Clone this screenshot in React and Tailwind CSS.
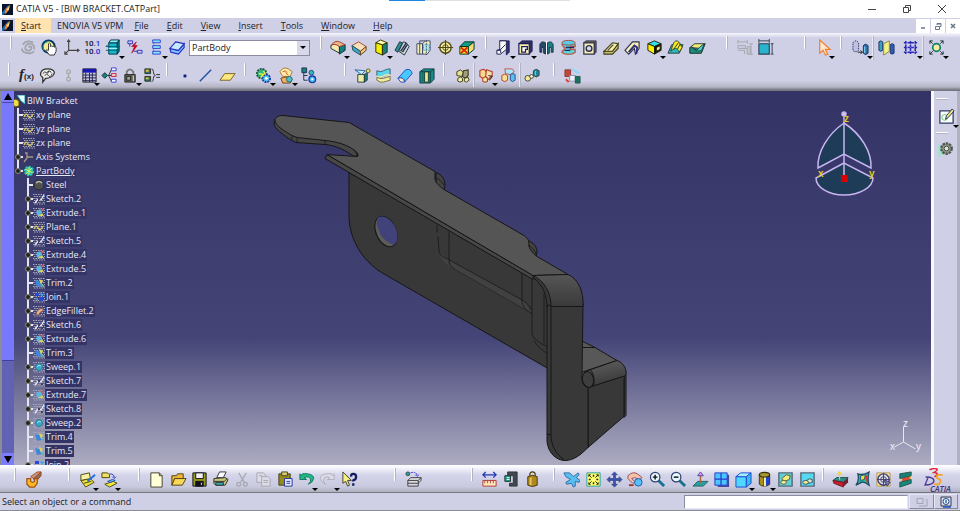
import React, { useState } from "react";

// 18x18 toolbar glyphs
const icons = {
  swirl: (
    <g stroke="#a2a2aa" strokeWidth="1.800">
      <path d="M9 9c1-2 4-1 3 1.500s-6 2.500-6.500-.5S8 4.500 11 5s5 3 4 6" />
      <path d="M3 6c2-4 8-4.500 11-2M2 10c0 4 5 6 9 4.500M5 14c3 2 8 1.500 10-1" />
    </g>
  ),
  hand: (
    <g>
      <circle cx="8" cy="8" r="6.500" fill="#f5eb8c" stroke="#003a60" strokeWidth="2" />
      <path d="M3 12c-2-4 0-9 5-9" stroke="#20a0b0" />
      <path d="M8 12V5q1-1.500 2 0v3q1-1 2 0 1-1 2 .5 1-.5 2 .5v4l-2 4h-5l-4-5q1-1.500 3 .5" fill="#fff" stroke="#333" />
    </g>
  ),
  axis: (
    <g stroke="#444" strokeWidth="1.200">
      <path d="M6 1v11h11M6 12l-4 4M4.500 3 6 1l1.500 2M15 10.500l2 1.500-2 1.500M2 13v3h3" />
    </g>
  ),
  solid: (
    <g stroke="#003848">
      <path d="M4 4h9v12H4z" fill="#18b8c8" />
      <path d="m4 4 2-3h9l-2 3z" fill="#90f0f8" />
      <path d="m13 4 2-3v12l-2 3z" fill="#108090" />
      <path d="M1 8h15M1 8l2-2M1 12h14" stroke="#006070" />
      <path d="M4 10h9" stroke="#b0f8ff" />
    </g>
  ),
  swap: (
    <g>
      <path d="M2 2h5v3H2zM4 5v3M12 12h5v3h-5zM8 13h4" stroke="#3030c0" />
      <path d="m11 3-5 5h3l-3 7 6-8H9z" fill="#d00020" stroke="#b00018" strokeWidth=".6" />
    </g>
  ),
  stack: (
    <g stroke="#3040d0" fill="#80e8f8">
      <path d="M5 1h8v3H5zM5 7h8v3H5zM5 13h8v3H5z" />
      <path d="M6 4v3M6 10v3" strokeDasharray="1 1" />
    </g>
  ),
  body: (
    <g stroke="#2030c0" strokeWidth="1.200">
      <path d="m1 10 1 4 8 2 6-7V5l-6 7z" fill="#80b8ff" />
      <path d="m7 3 9 2-6 7-9-2z" fill="#c8e8ff" />
    </g>
  ),
  pad: (
    <g stroke="#103030">
      <path d="M1 7q4-4 9 1v7l-9-5z" fill="#f6e8b0" />
      <path d="m10 8 6-2v6l-6 4z" fill="#108080" />
      <path d="M1 7q4-6 9-4l6 3-6 2Q5 4 1 7" fill="#e8b888" stroke="#a04030" />
    </g>
  ),
  pocket: (
    <g stroke="#a04838">
      <path d="m1 7 7-4 8 5-6 5z" fill="#f8e0b8" />
      <path d="m1 7 1 5 8 5v-4z" fill="#40a8c0" stroke="#205060" />
      <path d="m10 13 6-5v4l-6 5z" fill="#f0c878" stroke="#604020" />
    </g>
  ),
  shaft: (
    <g stroke="#303000">
      <path d="m3 4 7 2v11l-7-3z" fill="#f0f000" />
      <path d="m10 6 5-2v10l-5 3z" fill="#108080" />
      <path d="m3 4 5-3 7 3-5 2z" fill="#ffffb0" />
    </g>
  ),
  rib: (
    <g stroke="#183848">
      <path d="m1 12 5-9 3 1-5 10z" fill="#309090" />
      <path d="m5 13 5-10 3 1 3 4-5 9z" fill="#d8d8c8" />
      <path d="m7 13 6-9M9 14l5-8" stroke="#203058" strokeWidth="1.500" />
    </g>
  ),
  grill: (
    <g stroke="#404868">
      <path d="M2 5h6v11H2zM8 5l3-3h5v10l-3 4H8z" fill="#f6f0b8" />
      <path d="M5 5V2h6M5 5v11M8 9h8" />
      <path d="M9 6h6v6H9z" fill="#b8e8f0" stroke="#10a0b0" strokeDasharray="1 1" />
      <path d="M12 1v16" strokeDasharray="2 1" />
    </g>
  ),
  hole: (
    <g stroke="#504810">
      <circle cx="9" cy="9" r="6" fill="#f8f0a8" strokeWidth="1.500" />
      <circle cx="9" cy="9" r="3" />
      <path d="M9 1v16M1 9h16" strokeWidth="1.200" />
    </g>
  ),
  cutbox: (
    <g stroke="#003030">
      <path d="M2 8h9v8H2z" fill="#ffe020" />
      <path d="m2 8 5-5h10l-6 5z" fill="#10a080" />
      <path d="m11 8 6-5v8l-6 5z" fill="#f0e070" />
      <path d="m3 9 7 6M10 9l-7 6" stroke="#e02000" strokeWidth="1.800" />
    </g>
  ),
  draft: (
    <g stroke="#202058">
      <path d="M5 2h10v12l-3 3V4z" fill="#303078" />
      <path d="M5 2h7v9l-6 5H2v-4h3z" fill="#fbfbf4" />
      <path d="m2 12 4-1 5-5M6 11v4" />
    </g>
  ),
  shell: (
    <g stroke="#202050">
      <path d="m2 5 3-3h11v11l-3 3V5z" fill="#303068" />
      <path d="M2 5h11v11H2z" fill="#f6eeb0" strokeWidth="1.300" />
      <path d="M5 8h6v3H9v3H5z" fill="#fff" strokeWidth="1.300" />
    </g>
  ),
  split: (
    <g stroke="#203048">
      <path d="M2 6c1-4 4-3 6-2v12l-2-1V9H4v5H2z" fill="#284870" />
      <path d="M16 6c-1-4-4-3-6-2v12l2-1V9h2v5h2z" fill="#188080" />
      <path d="M9 2v15" stroke="#fff" />
    </g>
  ),
  thread: (
    <g>
      <path d="M2 5c0 3 3 3 3 5s-3 2-3 4c3 3 11 3 14 0V11h-5V8h5V5" fill="#60d0e0" stroke="#b06048" strokeWidth="1.500" />
      <ellipse cx="9" cy="4" rx="7" ry="2.500" fill="#50d0e8" stroke="#b04840" />
      <path d="M6 9h9M5 12h6" stroke="#202860" strokeWidth="1.500" />
    </g>
  ),
  boss: (
    <g stroke="#303050">
      <path d="m3 4 2-2h11v12l-2 2V4z" fill="#686850" />
      <path d="M3 4h11v12H3z" fill="#f6eeb0" strokeWidth="1.300" />
      <circle cx="8.500" cy="10" r="3" fill="#d8d8f0" strokeWidth="1.500" />
    </g>
  ),
  wedge: (
    <g stroke="#404018" strokeWidth="1.200">
      <path d="M1 13v3h9l6-6V5l-6 8z" fill="#c8c070" />
      <path d="m1 13 9-9 6 1-6 8z" fill="#f6f0b4" />
      <path d="m5 12 6-6" />
    </g>
  ),
  wedge2: (
    <g stroke="#303050" strokeWidth="1.200">
      <path d="m1 12 8-9h7v7l-4 6-1-6-6 6z" fill="#f6f0b4" />
      <path d="m5 14 6-7 3 2-1 7" stroke="#303080" strokeWidth="2" />
    </g>
  ),
  cube: (
    <g stroke="#202000">
      <path d="m2 5 7-3 7 3-7 3z" fill="#30e0f0" />
      <path d="M2 5v7l7 4V8z" fill="#f8f000" />
      <path d="m9 8 7-3v7l-7 4z" fill="#101010" />
      <path d="m11 9 4-2v4l-4 2z" fill="#f3eca8" />
    </g>
  ),
  surfA: (
    <g stroke="#284038">
      <path d="m1 15 4-9h12l-4 9z" fill="#30b8c0" />
      <path d="M4 13c2-6 3-11 6-11s4 4 6 7l-3 5c-2-5-5-5-9-1z" fill="#f8e820" />
      <path d="m7 11 5-7M11 11l3-6" />
    </g>
  ),
  surfB: (
    <g stroke="#284038">
      <path d="M1 15V9l5-4h11l-4 10z" fill="#f0e878" />
      <path d="M1 9v6h12l4-10-4 5z" fill="#189080" />
      <path d="M3 8c3 4 6 5 8 1l5-4-2 6c-4 3-8 2-11-3z" fill="#40d8e8" />
    </g>
  ),
  dimOff: (
    <g stroke="#a8a8b0">
      <path d="M2 3h10M2 1v4M12 1v4M2 7h8v3H2zM5 10h7v6M16 5v12M14 5h4M14 16h4M2 12h7v4" />
      <path d="M12 8h3v8h-3z" fill="#c8c8c8" />
    </g>
  ),
  dim: (
    <g stroke="#304050">
      <path d="M2 5h11v11H2z" fill="#28b4cc" strokeWidth="1.200" />
      <path d="M2 2h11M2 0v4M13 0v4M16 5v11M14.500 5h3M14.500 16h3" />
    </g>
  ),
  arrow: <path d="M5 1v14l3.500-3 2.500 5 2.500-1-2.500-5h5z" fill="#ffe8d0" stroke="#f08030" strokeWidth="1.300" />,
  copyA: (
    <g stroke="#203060">
      <path d="M1 4q3-4 6 0v8q-3 3-6 0z" fill="#c0c0e0" strokeDasharray="1.500 1" />
      <path d="M12 7q2-3 5 0v8q-3 3-5 0z" fill="#2870b0" />
      <path d="M6 14h5M9 12l2 2-2 2" stroke="#202020" />
      <path d="M13.500 8v7" stroke="#a0e8f8" />
    </g>
  ),
  mirror: (
    <g stroke="#203060">
      <path d="M1 3q2-2 4 0v9q-2 2-4 0z" fill="#38a0c0" />
      <path d="M13 6q2-2 4 0v9q-2 2-4 0z" fill="#2860c0" />
      <path d="m6 5 6-3v11l-6 4z" fill="#f3f088" stroke="#888830" />
    </g>
  ),
  grid: <path d="M4 2v14M9 2v14M14 2v14M2 4h14M2 9h14M2 14h14" stroke="#2828b8" strokeWidth="1.600" strokeDasharray="3 .8" />,
  target: (
    <g stroke="#203030">
      <circle cx="9" cy="9" r="4" fill="#f8f0a0" stroke="#108070" strokeWidth="1.800" />
      <path d="M2 5V2h3M13 2h3v3M16 13v3h-3M5 16H2v-3M2 2l3 3M16 2l-3 3M16 16l-3-3M2 16l3-3" />
    </g>
  ),
  talk: (
    <g stroke="#303030">
      <path d="M9 2c5 0 8 2 7 5s-5 5-9 5l-3 4v-5C0 9 1 2 9 2z" fill="#ececec" strokeWidth="1.300" />
      <path d="M4 7q2-3 4-1t2-2M6 9q2-3 4 0t4-2M9 5q3-2 4 1" />
    </g>
  ),
  link: (
    <g stroke="#a8a8a8" strokeWidth="1.300">
      <circle cx="9" cy="5" r="2" /><circle cx="9" cy="13" r="2" /><path d="M9 7v4" />
    </g>
  ),
  table: (
    <g>
      <path d="M2 2h14v14H2z" fill="#c8c8e0" stroke="#202020" />
      <path d="M2 2h14v4H2z" fill="#1818b8" />
      <path d="M2 8.500h14M2 11.500h14M2 14.500h14M5 6v10M9 6v10M12 6v10" stroke="#202050" />
    </g>
  ),
  branch: (
    <g>
      <path d="m1 9 3-3 3 3-3 3z" fill="#108080" stroke="#203030" />
      <path d="M7 9h4M8 9l3-6M8 9l3 6" stroke="#303030" />
      <path d="M11 1h5v3h-5zM11 13h5v3h-5z" fill="#fff" stroke="#3838e0" />
      <path d="M11 7h5v3h-5z" fill="#f8d0d8" stroke="#c02040" />
    </g>
  ),
  lock: (
    <g stroke="#282828">
      <path d="M5 8V5q3-5 7 0v3" strokeWidth="2" stroke="#787878" />
      <path d="M3 8h11v8H3z" fill="#606058" />
      <path d="M5 10h4v4H5z" fill="#a0a090" /><path d="M12 9v6" stroke="#e8e8c0" />
    </g>
  ),
  equal: (
    <g>
      <path d="M2 2h6v5H2zM2 10h6v5H2z" fill="#187878" stroke="#303020" />
      <path d="M3 4h3M3 12h3" stroke="#f0c030" strokeWidth="2" />
      <path d="M9 2q2 0 2 3t2 4q-2 0-2 3t-2 4M14 8h4M14 11h4" stroke="#303030" />
    </g>
  ),
  point: <path d="M8 8h3v3H8z" fill="#102070" />,
  line: <path d="M3 15 15 3" stroke="#2050a0" strokeWidth="1.500" />,
  plane: <path d="m1 14 5-7h11l-5 7z" fill="#ffe880" stroke="#706020" />,
  gears: (
    <g>
      <circle cx="7" cy="7" r="5" fill="#30b888" stroke="#205838" strokeWidth="2" strokeDasharray="2 1" />
      <circle cx="12" cy="12" r="4" fill="#50c8f0" stroke="#2038a0" strokeWidth="2" strokeDasharray="2 1" />
      <path d="m4 7 5 1-3 3M9 4l2 4" stroke="#f0f040" strokeWidth="1.500" />
      <circle cx="12" cy="12" r="1.500" fill="#fff" />
    </g>
  ),
  painter: (
    <g>
      <path d="M2 5q4-6 9-3l4 3-2 5H5z" fill="#ffe8a8" stroke="#b07828" />
      <path d="m8 6 3 3M5 5q3-2 5 1" stroke="#c06020" />
      <path d="M3 12q6-3 12 1l-2 4H5z" fill="#f0b060" stroke="#704020" />
      <circle cx="12" cy="13" r="3" fill="#50c0c8" stroke="#206878" />
    </g>
  ),
  treeGear: (
    <g>
      <path d="M2 1h5v5H2z" fill="#188080" stroke="#203050" />
      <path d="M4 6v8h4M4 9h4" stroke="#203050" />
      <circle cx="12" cy="6" r="2.500" fill="#30b8c0" stroke="#204880" />
      <circle cx="13" cy="13" r="3.500" fill="#48c8f8" stroke="#2038a0" strokeWidth="1.500" />
      <circle cx="13" cy="13" r="1" fill="#fff" />
    </g>
  ),
  extrude: (
    <g stroke="#204040">
      <path d="M4 8h7v8H4z" fill="#f3eca8" /><path d="m11 8 3-2v8l-3 2z" fill="#108080" />
      <path d="m1 3 11 1-4 4z" fill="#b8f0ff" stroke="#3060a0" />
      <circle cx="15" cy="4" r="2" stroke="#606020" fill="#e8e070" />
    </g>
  ),
  layers: (
    <g stroke="#306070">
      <path d="M2 11q4 2 7 1t7-2v4q-4 1-7 2t-7-2z" fill="#f3eca8" stroke="#707030" />
      <path d="M2 4q4 2 7 0t7-2v6q-4 0-7 2t-7-1z" fill="#58d8f0" />
      <path d="M2 9.500q4 2 7 0t7-1" stroke="#f3eca8" strokeWidth="1.500" />
    </g>
  ),
  halfpipe: (
    <g stroke="#2050c0">
      <path d="m1 12 8-9q6-2 7 4l-8 9q0-6-7-4z" fill="#48c8ff" />
      <path d="M1 12q6-2 7 4H4z" fill="#fff0c0" />
    </g>
  ),
  book: (
    <g stroke="#104040">
      <path d="m2 5 4-3h11v11l-4 4H2z" fill="#188888" />
      <path d="M7 5h4v11H7z" fill="#f3e88a" />
      <path d="M2 5h11l4-3M13 5v12" />
      <path d="M5 6v10" strokeDasharray="1 1" />
    </g>
  ),
  asm: (
    <g stroke="#404020">
      <path d="m3 5 4-2 3 3-2 4-5-1z" fill="#e8e090" />
      <path d="m10 4 5-1v6l-3 3-3-2z" fill="#a0a080" strokeWidth="1.200" />
      <path d="M4 12q3-3 5 0v3q-3 2-5 0zM11 12l4-1 1 3-3 2-2-1z" fill="#f3ec9c" />
    </g>
  ),
  asmRed: (
    <g stroke="#b84030" strokeWidth="1.200">
      <path d="M2 4q4-3 6 0l2 5-3 4-5-3z" fill="#f8d890" />
      <path d="m9 3 6 2v4l-4 4-3-3z" fill="#f8e0a8" />
      <path d="M5 12q3-3 5 0v3q-3 2-5 0z" fill="#f3ec9c" /><path d="m11 9 4 1-3 4" stroke="#503030" />
    </g>
  ),
  asmBlue: (
    <g>
      <path d="M5 2h8l2 3-4 3-5-1z" fill="#a8e8ff" stroke="#d05048" />
      <path d="M2 9q3-3 6 0v5q-3 3-6 0z" fill="#f8e090" stroke="#b84030" />
      <path d="M11 8q3-2 5 0v6q-3 3-5 0z" fill="#58c0f0" stroke="#305088" />
    </g>
  ),
  joint: (
    <g stroke="#404030">
      <circle cx="4" cy="12" r="3" fill="#f3ec9c" /><circle cx="8" cy="10" r="2" fill="#f8f8d0" />
      <path d="M10 4q3-3 6 0v5q-3 3-6 0z" fill="#1888a0" />
      <path d="M12 4v5" stroke="#80d8e8" />
    </g>
  ),
  catalog: (
    <g>
      <path d="m5 0 13 6-5 1z" fill="#88d8f8" />
      <path d="M1 3h6v7H1z" fill="#c04838" stroke="#903830" /><path d="M6 9h6v6H6z" fill="#f0f0f8" stroke="#8090b8" />
      <path d="M12 10h5v7h-5z" fill="#187060" stroke="#205848" /><path d="m2 13 3 3" stroke="#e04030" strokeWidth="2" />
    </g>
  ),
  catch: (
    <g stroke="#a05018">
      <path d="m6 6 7-5h4l-6 8z" fill="#c89888" /><path d="m9 8 8-7v4l-6 7z" fill="#906858" />
      <path d="M2 8h4v3q2 2 4 0V8h3v5l-3 4H5l-3-3z" fill="#ffb820" strokeWidth="1.300" />
    </g>
  ),
  drawA: (
    <g stroke="#484810">
      <path d="m2 10 10-2 4 4-9 5z" fill="#f0e040" /><path d="m2 4 9-2 1 6-10 2z" fill="#f6f0a0" />
      <path d="m9 11 8-7" stroke="#2070e0" strokeWidth="2" /><path d="M5 13l8-2" />
    </g>
  ),
  drawB: (
    <g stroke="#484810">
      <path d="M1 2h6l2 2v3H1z" fill="#f0e060" /><path d="m4 14 9-3 4 2-8 4z" fill="#f0e840" />
      <path d="M9 3q5 0 5 4M12 6l2 2 2-2" stroke="#2838c8" /><path d="m7 11 5-2 3 1-5 2z" fill="#60c8f0" stroke="#3050a0" />
    </g>
  ),
  page: (
    <g stroke="#404030"><path d="M3 2h9l3 3v12H3z" fill="#ffffd8" /><path d="M12 2v3h3" /></g>
  ),
  open: (
    <g stroke="#504010"><path d="M2 15V5h5l1-2h6v5H5z" fill="#f0b838" /><path d="M2 15 5 8h12l-4 7z" fill="#f8d858" /></g>
  ),
  save: (
    <g stroke="#101020"><path d="M2 2h14v14H2z" fill="#989818" /><path d="M5 2h8v6H5z" fill="#f0f0f8" /><path d="M5 11h8v5H5z" fill="#101020" /><path d="M10 12h2v3h-2z" fill="#fff" /></g>
  ),
  print: (
    <g stroke="#303030"><path d="m2 8 12-1 3 2-3 6H4l-2-2z" fill="#c8c878" /><path d="m5 7 3-6h7l-3 6z" fill="#fff" /><path d="M2 11h11l3-3" /><path d="M4 12h8v3H4z" fill="#30a8b0" /></g>
  ),
  cut: (
    <g stroke="#a8a8b0" strokeWidth="1.300"><path d="m5 2 6 10M13 2 7 12" /><circle cx="5" cy="14" r="2" /><circle cx="12" cy="14" r="2" /></g>
  ),
  copy: (
    <g stroke="#a8a8b0" fill="#dcdce8"><path d="M2 2h7l2 2v8H2z" /><path d="M7 6h7l2 2v8H7z" /><path d="M9 10h5M9 12h5M4 5h4" /></g>
  ),
  paste: (
    <g stroke="#404018"><path d="M2 3h12v12H2z" fill="#988820" /><path d="M5 1h6v4H5z" fill="#d8d070" /><path d="M8 8h8v8H8z" fill="#e8f0ff" stroke="#2030a0" /><path d="M10 11h4M10 13h4" stroke="#2030a0" /></g>
  ),
  undo: <path d="M2 3v6h7L6.500 7q5-2 6.500 1t-2 6q5-2 5.500-6T10 3 4 5z" fill="#20b888" stroke="#107858" />,
  redo: <path d="M16 3v6H9l2.500-2q-5-2-6.500 1t2 6q-5-2-5.500-6T8 3t6 2z" fill="#dcdce8" stroke="#b0b0b8" />,
  help: (
    <g><path d="M2 1v12l3-2 2 5 2-1-2-5h4z" fill="#f8f080" stroke="#404030" /><path d="M11 6q-1-3 2-3t3 3-3 4v1M13 13v2.500" stroke="#102060" strokeWidth="2.400" /></g>
  ),
  rotateBox: (
    <g stroke="#404040"><path d="m3 10 3-3h11l-3 3v6H3z" fill="#d8d8e0" /><path d="M3 10h11M3 13h11l3-3V7" /><circle cx="3" cy="3" r="2" fill="#20a8b0" /><path d="M6 2q6-2 7 3M11 4l2 2 2-3" stroke="#2828d0" strokeDasharray="2 1" /></g>
  ),
  ruler: (
    <g><path d="M2 4h14M5 1 2 4l3 3M13 1l3 3-3 3" stroke="#2038b8" strokeWidth="1.300" /><path d="M2 10h14v6H2z" fill="#ffe8b8" stroke="#b03838" /><path d="M4 10v3M7 10v3M10 10v3M13 10v3" stroke="#a04848" /></g>
  ),
  clamp: (
    <g><path d="M6 1h10v15H8v-3h4V5H6z" fill="#404850" stroke="#303438" /><path d="M3 5h6v6H3z" fill="#20a088" stroke="#203838" /><path d="M5 7h3M5 9h3" stroke="#fff" /></g>
  ),
  weight: (
    <g stroke="#483810"><path d="M6 5q0-4 3-4t3 4" strokeWidth="1.300" /><path d="M4 6q5-3 10 0v9q-5 3-10 0z" fill="#b08820" /><path d="M7 7v8" stroke="#e8c858" strokeWidth="2" /></g>
  ),
  plane3: <path d="m1 2 2 4 5 3-5 3 1 2 5-1 2 4 2-1v-5l4 1 1-2-4-3 3-3-1-2-5 4-4-4z" fill="#58c0f0" stroke="#3068a0" />,
  fit: (
    <g stroke="#282810"><path d="M2 2h14v14H2z" fill="#ffff70" stroke="#20a0a0" /><path d="m4 4 3 3M14 4l-3 3M4 14l3-3M14 14l-3-3M4 6V4h2M12 4h2v2M14 12v2h-2M6 14H4v-2" /><path d="M9 4v2M9 12v2M4 9h2M12 9h2" strokeWidth="1.500" /></g>
  ),
  pan: <path d="m9 1-3 3h2v4H4V6L1 9l3 3v-2h4v4H6l3 3 3-3h-2v-4h4v2l3-3-3-3v2h-4V4h2z" fill="#3858b0" stroke="#203070" strokeWidth=".6" />,
  orbit: (
    <g><path d="M1 5q5-5 10-2l5 4-3 2-5-2-3 1 4 4-3 1-5-5z" fill="#f8c0a8" stroke="#905060" /><path d="M2 15h5" stroke="#a03838" strokeWidth="2" /><circle cx="12" cy="12" r="4" fill="#58c0f8" stroke="#2058a8" /></g>
  ),
  zoomIn: (
    <g><path d="m10 10 6 6" stroke="#187090" strokeWidth="3" /><circle cx="6.500" cy="6.500" r="5" fill="#e8f8ff" stroke="#304070" strokeWidth="1.300" /><path d="M4 6.500h5M6.500 4v5" stroke="#101010" strokeWidth="1.500" /></g>
  ),
  zoomOut: (
    <g><path d="m10 10 6 6" stroke="#187090" strokeWidth="3" /><circle cx="6.500" cy="6.500" r="5" fill="#e8f8ff" stroke="#304070" strokeWidth="1.300" /><path d="M4 6.500h5" stroke="#101010" strokeWidth="1.500" /></g>
  ),
  normal: (
    <g><path d="m1 16 5-5h11l-5 5z" fill="#28a0a0" stroke="#206868" /><path d="M9 13V4" stroke="#b06040" strokeWidth="1.500" /><path d="m6 5 3-4 3 4z" fill="#c8a8e8" stroke="#6040a0" /></g>
  ),
  views: (
    <g><path d="M15 4h2v13H5v-2h10z" fill="#484898" /><path d="M2 2h13v13H2z" fill="#48c8ff" stroke="#2838c8" /><path d="M8.500 2v13M2 8.500h13" stroke="#2838c8" strokeWidth="1.300" /></g>
  ),
  iso: (
    <g stroke="#2048d0"><path d="M1 6h11v11H1z" fill="#50d8ff" /><path d="m1 6 5-4h11l-5 4z" fill="#a0f0ff" /><path d="m12 6 5-4v11l-5 4z" fill="#38b8f0" /></g>
  ),
  shade: (
    <g stroke="#383010"><path d="M3.500 4v10q2 2 5 2V5z" fill="#a89018" /><path d="M9 5h5.500v9q-2 2-5.500 2z" fill="#2040d0" /><ellipse cx="9" cy="4" rx="5.500" ry="2.500" fill="#a89830" strokeWidth="1.300" /><path d="M9.500 7v9" stroke="#f8f8b0" strokeWidth="2" /></g>
  ),
  hide: (
    <g><path d="M2 2h14v14H2z" fill="#60d0d8" stroke="#586878" strokeWidth="1.500" /><path d="m5 8 5-4 4 1-1 4-5 2z" fill="#f3ec80" stroke="#605830" /><ellipse cx="7" cy="12" rx="3" ry="2" fill="#f3ec9c" stroke="#605830" /></g>
  ),
  showSpace: (
    <g><path d="M2 2h14v14H2z" fill="#58d8f0" stroke="#586878" strokeWidth="1.500" /><path d="M8 10q3-3 6-1v3q-2 1-5 1z" fill="#c8e8d8" stroke="#405050" /><ellipse cx="7" cy="12" rx="3" ry="2" fill="#f3ec9c" stroke="#405050" /></g>
  ),
  redplane: (
    <g><path d="m1 10 4-3h12l-5 5z" fill="#289090" stroke="#204848" /><path d="m1 10 11 2v5L2 13z" fill="#c82030" stroke="#701820" /><path d="m12 12 5-5v5l-5 5z" fill="#702030" /><path d="M8 9V1M5.500 4 8 1l2.500 3" stroke="#f0d820" strokeWidth="1.300" /></g>
  ),
  curvature: (
    <g stroke="#204860"><path d="M4 3q6 2 12-2-2 8 0 14-5-4-8-3l-6 3q4-5 2-12z" fill="#20b8a8" strokeWidth="1.300" /><path d="m7 5 5-1-1 5-4 1z" fill="#f0e030" stroke="#205890" /><path d="m13 5 1 7" stroke="#d83020" strokeWidth="1.500" /></g>
  ),
  section: (
    <g><path d="M2 2h14v14H2z" fill="#ffe890" stroke="#b09860" /><circle cx="9" cy="9" r="6" stroke="#404070" strokeWidth="1.500" fill="#e0e0e8" /><circle cx="9" cy="9" r="3" stroke="#404070" /><path d="M9 2v14M2 9h14" stroke="#404070" /><path d="m9 9 7 3-3 4z" fill="#7878b0" stroke="#404070" /></g>
  ),
  material: (
    <g><path d="m5 7 9-2v5l-9 2z" fill="#e04838" stroke="#f0d030" /><path d="m3 3 12-2v4L3 8z" fill="#188078" stroke="#205850" /><path d="m3 12 12-3v4L3 17z" fill="#188878" stroke="#205850" /></g>
  ),
  sketcher: (
    <g><path d="M2 3h14v13H2z" fill="#f8ffff" stroke="#303860" strokeWidth="1.300" /><circle cx="7" cy="10" r="3" stroke="#68c068" /><path d="m8 12 1-4 6-7 2 2-6 7z" fill="#f0e080" stroke="#203058" /></g>
  ),
  gear: (
    <g><path d="M0 5v13l17-8z" fill="#a8e0d0" /><circle cx="9" cy="9" r="5.500" fill="#909890" stroke="#505850" strokeWidth="2.500" strokeDasharray="2.500 1" /><circle cx="9" cy="9" r="2.500" fill="#e0e0e0" stroke="#404840" /></g>
  ),
};

function Icon({ name }) {
  if (name === "decimals")
    return (
      <span className="font-['Roboto',sans-serif] text-[8px] leading-[8px] font-medium text-[#101030]">
        10.<span className="text-[#2030e0]">1</span>
        <br />
        10.<span className="text-[#2030e0]">0</span>
      </span>
    );
  if (name === "formula")
    return (
      <span className="font-['Liberation_Serif',serif] text-[15px] leading-4 font-bold text-[#222] italic">
        f<span className="font-['Liberation_Sans',sans-serif] text-[8px] not-italic">(x)</span>
      </span>
    );
  return (
    <svg viewBox="0 0 18 18" fill="none" className="h-[17px] w-[17px] shrink-0" aria-hidden="true">
      {icons[name]}
    </svg>
  );
}

// "name*" marks a tool with a flyout, "|" a separator
function Group({ label, tools, width }) {
  return (
    <div role="group" aria-label={label} className="flex h-6 items-center">
      <span className="mr-1.5 h-[13px] w-0.5 self-start border-r border-[#b4b4c0] bg-white" />
      <div className={`flex items-center ${width}`}>
        {tools.map((tool, i) => {
          if (tool === "|") return <span key={i} className="-my-1 h-6 w-0.5 border-r border-[#b4b4c0] bg-[#e8e8f4]" />;
          const name = tool.replace("*", "");
          return (
            <button key={i} type="button" aria-label={name} className="relative flex h-[22px] min-w-0 flex-1 items-center justify-center">
              <Icon name={name} />
              {tool.endsWith("*") && (
                <span className="absolute -right-px bottom-0 border-x-[3px] border-t-[3px] border-x-transparent border-t-black" />
              )}
            </button>
          );
        })}
      </div>
    </div>
  );
}

function AppIcon() {
  return (
    <svg viewBox="0 0 12 12" className="h-[11px] w-[11px] shrink-0" aria-hidden="true">
      <path d="M0 0h12v12H0z" fill="#08142c" />
      <path d="M0 9 6 2l3-1-4 6-3 5H0z" fill="#1c62a4" />
      <path d="M3 9q1-5 6-8-1 4-2 6l-3 4z" fill="#f08a2c" />
      <path d="m5 6 3-3-1 4z" fill="#fff0b0" />
    </svg>
  );
}

const menus = ["File", "Edit", "View", "Insert", "Tools", "Window", "Help"];

function TitleBar() {
  return (
    <header className="relative flex h-[18px] items-center bg-white pl-0.5">
      <AppIcon />
      <h1 className="ml-[3px] text-[9px] leading-3 text-[#222]">CATIA V5 - [BIW BRACKET.CATPart]</h1>
      <div className="absolute top-0 left-[389px] flex h-px w-[181px] bg-[#e0e0e0]">
        <span className="w-9 bg-[#1e88e0]" />
      </div>
      <div className="ml-auto flex">
        <button type="button" aria-label="Minimize" className="flex h-4 w-[35px] items-center justify-center">
          <svg viewBox="0 0 10 10" className="h-2.5 w-2.5" stroke="#444"><path d="M1 5.500h8" /></svg>
        </button>
        <button type="button" aria-label="Restore" className="flex h-4 w-[35px] items-center justify-center">
          <svg viewBox="0 0 10 10" className="h-2.5 w-2.5" fill="none" stroke="#444"><path d="M1.500 3.500h5v5h-5zM3.500 3.500v-2h5v5h-2" /></svg>
        </button>
        <button type="button" aria-label="Close" className="flex h-4 w-9 items-center justify-center">
          <svg viewBox="0 0 10 10" className="h-2.5 w-2.5" stroke="#444"><path d="m1 1 8 8M9 1 1 9" /></svg>
        </button>
      </div>
    </header>
  );
}

function MenuBar() {
  return (
    <nav className="flex h-[15px] items-center bg-[#cfcfe6] pl-0.5 text-[9px] leading-3 text-[#222]">
      <AppIcon />
      <button type="button" className="ml-0.5 h-[15px] w-9 bg-[#ffe3b0] pl-1.5 text-left"><u>S</u>tart</button>
      <button type="button" className="pr-0.5 pl-1.5">ENOVIA V5 VPM</button>
      {menus.map((m) => (
        <button key={m} type="button" className="px-[9px]"><u>{m[0]}</u>{m.slice(1)}</button>
      ))}
      <div className="ml-auto flex h-[14px] gap-px">
        <button type="button" aria-label="Minimize document" className="flex w-[14px] items-center justify-center bg-white">
          <svg viewBox="0 0 8 8" className="h-2 w-2" stroke="#667788" strokeWidth="1.500"><path d="M2 6h4" /></svg>
        </button>
        <button type="button" aria-label="Restore document" className="flex w-[14px] items-center justify-center bg-white">
          <svg viewBox="0 0 8 8" className="h-2 w-2" fill="none" stroke="#667788"><path d="M1.500 4.500h4v3h-4zM3 3V1.500h4v3H6M3 2h4" /></svg>
        </button>
        <button type="button" aria-label="Close document" className="flex w-[14px] items-center justify-center bg-white">
          <svg viewBox="0 0 8 8" className="h-2 w-2" stroke="#667788" strokeWidth="1.500"><path d="m2 2 4 4M6 2 2 6" /></svg>
        </button>
      </div>
    </nav>
  );
}

function TopToolbars() {
  const [part, setPart] = useState("PartBody");
  return (
    <div className="bg-[linear-gradient(to_bottom,#f8f8fe_0,#cfcfe6_5px,#cfcfe6_48px,#b4b4c4_54px,#77777f_57px)] pb-[5px]">
      <div className="flex h-[27px] items-center pt-0.5 pl-2.5">
        <Group label="Measure" width="w-[170px]" tools={["swirl", "hand", "axis", "decimals", "solid*", "swap", "stack*", "body"]} />
        <div className="relative ml-px h-4 w-[121px] border border-[#8c8ca0] bg-white">
          <select
            aria-label="In work object"
            value={part}
            onChange={(e) => setPart(e.target.value)}
            className="block h-full w-full appearance-none pl-0.5 text-[9px] leading-3 text-[#222]"
          >
            <option>PartBody</option>
          </select>
          <span className="pointer-events-none absolute inset-y-0 right-0 flex w-3 items-center justify-center bg-[#d8d8ea]">
            <span className="border-x-[3px] border-t-[3px] border-x-transparent border-t-black" />
          </span>
        </div>
        <div className="flex pl-2.5">
          <Group label="Sketch features" width="w-[149px]" tools={["pad*", "pocket", "shaft*", "rib", "grill", "hole", "cutbox*"]} />
        </div>
        <div className="flex pl-2">
          <Group label="Dress-up" width="w-[215px]" tools={["draft*", "shell*", "split", "thread", "boss", "wedge", "wedge2", "cube*", "surfA", "surfB"]} />
        </div>
        <div className="flex pl-[18px]">
          <Group label="Dimensions" width="w-[42px]" tools={["dimOff", "dim"]} />
        </div>
        <div className="flex pl-7">
          <Group label="Select" width="w-[22px]" tools={["arrow*"]} />
        </div>
        <div className="flex pl-1.5">
          <Group label="Transform" width="w-[100px]" tools={["copyA*", "|", "mirror", "grid*", "|", "target*"]} />
        </div>
      </div>
      <div className="flex h-[26px] items-center pt-1 pl-2">
        <Group label="Knowledge" width="w-[146px]" tools={["formula", "talk", "link", "table*", "branch", "lock*", "equal"]} />
        <div className="flex pl-1">
          <Group label="Reference elements" width="w-[64px]" tools={["point", "line", "plane"]} />
        </div>
        <div className="flex pl-1.5">
          <Group label="Automation" width="w-[68px]" tools={["gears*", "painter*", "treeGear"]} />
        </div>
        <div className="flex pl-6">
          <Group label="Surface features" width="w-[85px]" tools={["extrude", "layers", "halfpipe", "book"]} />
        </div>
        <div className="flex pl-1.5">
          <Group label="Boolean" width="w-[92px]" tools={["asm", "|", "asmRed*", "asmBlue", "|", "joint"]} />
        </div>
        <div className="flex pl-2.5">
          <Group label="Catalog" width="w-[22px]" tools={["catalog"]} />
        </div>
      </div>
    </div>
  );
}

// label, icon kind, expandable
const features = [
  ["Steel", "steel", false],
  ["Sketch.2", "sketch", true],
  ["Extrude.1", "extrude", true],
  ["Plane.1", "plane", true],
  ["Sketch.5", "sketch", true],
  ["Extrude.4", "extrude", true],
  ["Extrude.5", "extrude", true],
  ["Trim.2", "trim", false],
  ["Join.1", "join", true],
  ["EdgeFillet.2", "fillet", true],
  ["Sketch.6", "sketch", true],
  ["Extrude.6", "extrude", true],
  ["Trim.3", "trim", false],
  ["Sweep.1", "sweep", true],
  ["Sketch.7", "sketch", true],
  ["Extrude.7", "extrude", true],
  ["Sketch.8", "sketch", true],
  ["Sweep.2", "sweep", true],
  ["Trim.4", "trim", false],
  ["Trim.5", "trim", false],
  ["Join.2", "join", true],
];

const hatch = (
  <path d="M0 1.500h12M1 3.500h11M0 5.500h12M1 7.500h11M0 9.500h12M1 11h11" stroke="#a8a8b8" strokeDasharray="1.500 1" />
);

const nodeIcons = {
  part: <g><path d="M4 0h8v9L8 6z" fill="#e8ffff" stroke="#20a0b0" /><path d="m0 5 3-1 3 2v5l-4 1-2-3z" fill="#f0dc40" stroke="#584c10" /></g>,
  plane: <g>{hatch}<path d="M1 8q2-5 4-1t5-2" stroke="#d8c860" strokeWidth="1.300" /></g>,
  axes: <path d="M2 2h2v5l-3 4M4 6h6" stroke="#a89880" strokeWidth="1.300" />,
  body: <g><circle cx="6" cy="6" r="4" fill="#38c890" stroke="#28c0b8" strokeWidth="2.500" strokeDasharray="2 1" /><path d="M2 4l8 4M6 2v8M3 9l6-6" stroke="#d0f070" /></g>,
  steel: <g><circle cx="6" cy="6" r="5" fill="#505050" stroke="#2a2a2a" /><path d="M3 4q3-3 6 0" stroke="#b8b8b8" strokeWidth="1.500" /></g>,
  sketch: <g>{hatch}<path d="m2 10 3-4 3 1 3-5" stroke="#e8e8f8" strokeWidth="1.300" /><path d="M5 5h2v2H5zM8 8h2v2H8z" fill="#404060" /></g>,
  extrude: <g>{hatch}<path d="m3 5 4-3 2 3-4 5z" fill="#58b8e0" /><path d="m7 3 4-2v3z" fill="#d85050" /><path d="m5 9 4-3 2 3z" fill="#d8d060" /></g>,
  trim: <g>{hatch}<path d="m2 3 4 1 3 5-5 1z" fill="#3888e0" /><path d="m6 2 4 2-2 4z" fill="#d8d860" /><path d="M8 8h3v3z" fill="#48c0a8" /></g>,
  join: <g>{hatch}<path d="M2 2h4v3H2zM6 6h4v4H6z" fill="#2848d8" /><path d="m7 2 4 1-2 3zM2 7h3v3z" fill="#38a8e0" /></g>,
  fillet: <g>{hatch}<path d="M3 10q0-6 7-7v3q-4 1-4 4z" fill="#d8b898" stroke="#885050" /></g>,
  sweep: <g>{hatch}<circle cx="6" cy="6" r="3.500" fill="#38a8c8" stroke="#307898" /><path d="M4 6q2-3 4-1" stroke="#a8e0f0" /></g>,
};

function NodeIcon({ kind }) {
  return <svg viewBox="0 0 12 12" fill="none" className="h-3 w-3 shrink-0" aria-hidden="true">{nodeIcons[kind]}</svg>;
}

function TreeRow({ label, kind, expandable, last, current }) {
  return (
    <div className="flex h-[14px] items-center">
      <span className="relative flex h-full w-1.5 items-center">
        <span className={`w-0.5 self-start bg-[#e4e4f0] ${last ? "h-1/2" : "h-full"}`} />
        <span className="h-0.5 flex-1 bg-[#e4e4f0]" />
        {expandable && <span className="absolute -left-0.5 h-1.5 w-1.5 rounded-full border border-[#8c8c78] bg-[#222]" />}
      </span>
      <NodeIcon kind={kind} />
      <span className={`bg-[#333366] px-px text-[9px] leading-3 text-[#e8e8f4] ${current ? "underline" : ""}`}>{label}</span>
    </div>
  );
}

function SpecTree() {
  return (
    <div className="relative w-fit pt-[3px] pl-[3px]">
      <div className="flex h-[14px] items-center">
        <span className="-ml-1 flex"><NodeIcon kind="part" /></span>
        <span className="ml-px px-px text-[9px] leading-3 text-[#e8e8f4]">BIW Bracket</span>
      </div>
      <TreeRow label="xy plane" kind="plane" />
      <TreeRow label="yz plane" kind="plane" />
      <TreeRow label="zx plane" kind="plane" />
      <TreeRow label="Axis Systems" kind="axes" expandable />
      <TreeRow label="PartBody" kind="body" expandable last current />
      <div className="pl-2.5">
        {features.map(([label, kind, expandable]) => (
          <TreeRow key={label} label={label} kind={kind} expandable={expandable} />
        ))}
      </div>
    </div>
  );
}

function Bracket() {
  return (
    <svg viewBox="14 91 917 373" className="absolute inset-0 h-full w-full" fill="none" stroke="#161616" strokeWidth="1" strokeLinejoin="round" aria-label="BIW bracket model" role="img">
      <defs>
        <linearGradient id="bend" x1="0" y1="0" x2="0" y2="1">
          <stop offset="0" stopColor="#565656" />
          <stop offset="1" stopColor="#3a3a3a" />
        </linearGradient>
        <linearGradient id="roll" x1="0" y1="0" x2="0.300" y2="1">
          <stop offset="0" stopColor="#626262" />
          <stop offset="1" stopColor="#383838" />
        </linearGradient>
      </defs>
      {/* web with the round hole */}
      <path d="M349 172v45c1 25 16 46 36 57l163 94 4-62-4-26-15-6z" fill="#383838" />
      <ellipse cx="386" cy="231" rx="10" ry="16" transform="rotate(-24 386 231)" fill="#5c5c58" />
      <path d="M378 217c7-4 17 4 19 15 1 6 0 11-3 12-6-1-13-7-15-14-2-5-3-9-1-13z" fill="#42427a" stroke="none" />
      {/* pressed recess */}
      <path d="M439 250c2 10 8 15 14 18l78 44-7-12-78-43z" fill="#414141" stroke="none" />
      <path d="M437 225v7m1 4 1 14c1 4 3 6 6 7l78 43c4 3 7 5 8 9" strokeWidth=".8" />
      <path d="M449 231v28c0 5 2 8 6 10M522 273v27c0 6 4 10 10 13" strokeWidth=".8" />
      <path d="M532 277v56c1 5 6 8 9 10l6 3M534 340c4 7 9 10 13 13M544 293v50" strokeWidth=".8" />
      <path d="M455 269l75 43" stroke="#2b2b2b" />
      {/* top flange */}
      <path d="M275 119l-1 5c1 5 15 15 22 18l29 2c12 1 22 7 29 12l4-1-6-9-75-29z" fill="#464646" />
      <path d="M327 154l-2 4 208 121v-4z" fill="#474747" />
      <path d="M436 172c6 2 9 7 9 13l-1 5-8-4zM528 240c6 2 9 7 9 11l-1 5-8-5z" fill="#424242" />
      <path d="M275 120c0-3 3-5 8-5l66 7 86 49 0 8c1 4 4 6 9 10l80 46c4 3 5 5 5 9 0 4 2 7 8 12l31 18-35 1-206-121 30 2c2 0 1-3-1-5-8-7-20-10-31-11l-28-3-5-2c-7-4-17-10-17-15z" fill="#555" />
      <path d="M436 178c3 0 6 3 8 7M528 245c3 1 7 4 8 9M292 135v4M297 138v4M325 140v4" strokeWidth=".8" />
      {/* foot */}
      <path d="M581 340l14 7 22 13-36 12z" fill="#585858" />
      <path d="M588 387l37-12v40l-37 32z" fill="#383838" />
      <path d="M585 371l32-11c6 2 10 8 9 15l-38 12c-5-2-6-10-3-16z" fill="url(#roll)" />
      <path d="M626 375v40l-2 2v-40M583 347l12 0M590 369c4 4 5 11 3 17" />
      {/* front tab and its bend */}
      <path d="M547 305v136c1 11 9 19 18 19 9 0 16-6 23-13v-60c-5-1-7-6-6-13l1-71z" fill="#383838" />
      <path d="M533 275l35-1c10 4 16 17 15 32h-32c0-14-7-26-18-31z" fill="url(#bend)" />
      <path d="M533 277c10 7 14 18 14 30M551 306v128c0 11 5 20 13 25M547 434h4" />
      <ellipse cx="588" cy="379" rx="5.500" ry="8" transform="rotate(-12 588 379)" fill="#3e3e3e" />
    </svg>
  );
}

function Compass() {
  return (
    <svg viewBox="812 108 66 92" className="absolute top-[17px] right-[53px] h-[92px] w-[66px]" fill="none" stroke="#c8b4f0" strokeWidth="1.500" role="img" aria-label="Compass">
      <path d="M844 123c-16 11-27 29-26 45l26-14 27 14c1-16-10-34-27-45z" fill="#1e3c58" />
      <path d="M844 163l-28 15c0 9 12 17 28 17s29-8 29-17z" fill="#1e3c58" />
      <path d="M844 115v63" />
      <circle cx="844" cy="114" r="2" fill="#d8c8ff" />
      <path d="M841 175h7v7h-7z" fill="#d80000" stroke="none" />
      <g fill="#e0cc20" stroke="none" className="font-['Liberation_Sans',sans-serif] text-[10px] font-bold">
        <text x="844" y="122">z</text>
        <text x="818" y="177">x</text>
        <text x="869" y="177">y</text>
      </g>
    </svg>
  );
}

function Triad() {
  return (
    <svg viewBox="886 416 40 40" className="absolute right-[5px] bottom-2 h-10 w-10" fill="none" stroke="#e8e8f0" role="img" aria-label="Axes">
      <path d="M903.500 426v15l-9 5M903.500 441l12 7" />
      <g fill="#f0f0f8" stroke="none" className="font-['Liberation_Sans',sans-serif] text-[10px]">
        <text x="903" y="426">z</text>
        <text x="890" y="449">x</text>
        <text x="916" y="449">y</text>
      </g>
    </svg>
  );
}

function Viewport() {
  return (
    <main className="flex min-h-0 flex-1 bg-[#cfcfe6]">
      <div className="flex w-[14px] flex-col border-l-2 border-[#8c8c94] bg-[#6262b4]">
        <button type="button" aria-label="Scroll up" className="flex h-3 items-center justify-center border-b border-[#4848a8] bg-[#7c7cff]">
          <span className="border-x-[4px] border-b-[7px] border-x-transparent border-b-black" />
        </button>
        <div className="h-[69%] border-b border-[#4040a0] bg-[#7878fc]" />
        <button type="button" aria-label="Scroll down" className="mt-auto flex h-3 items-center justify-center bg-[#7c7cff]">
          <span className="border-x-[4px] border-t-[7px] border-x-transparent border-t-black" />
        </button>
      </div>
      <div className="relative min-w-0 flex-1 overflow-hidden bg-[linear-gradient(to_bottom,#333366_0%,#444477_66%,#adacc2_100%)]">
        <Bracket />
        <SpecTree />
        <Compass />
        <Triad />
      </div>
      <aside className="flex w-[29px] flex-col border-r-[3px] border-l-[3px] border-r-[#b0b0c0] border-l-[#f8f8fe] pt-[7px] pl-0.5">
        <span className="h-0.5 w-3 border-b border-[#b4b4c0] bg-white" />
        <button type="button" aria-label="Sketcher" className="relative mt-2 flex h-[18px] w-[21px] justify-center">
          <Icon name="sketcher" />
          <span className="absolute -right-0.5 -bottom-0.5 border-x-[3px] border-t-[3px] border-x-transparent border-t-black" />
        </button>
        <span className="mt-1.5 h-0.5 w-3 border-b border-[#b4b4c0] bg-white" />
        <button type="button" aria-label="Workbench" className="mt-1.5 flex h-[18px] w-[21px] justify-center">
          <Icon name="gear" />
        </button>
      </aside>
    </main>
  );
}

function BottomToolbar() {
  return (
    <div className="flex h-7 items-center border-b border-[#77777f] bg-[linear-gradient(to_bottom,#ffffff_0,#f4f4fc_3px,#d4d4ea_10px,#c8c8de_22px,#b0b0c0_27px)] pt-0.5 pl-3.5">
      <Group label="Catch" width="w-[22px]" tools={["catch"]} />
      <div className="flex pl-6">
        <Group label="Draw" width="w-[44px]" tools={["drawA*", "drawB*"]} />
      </div>
      <div className="flex pl-[18px]">
        <Group label="Standard" width="w-[214px]" tools={["page", "open", "save", "print", "cut", "copy", "paste", "undo*", "redo*", "help"]} />
      </div>
      <div className="flex pl-[34px]">
        <Group label="Update" width="w-[22px]" tools={["rotateBox"]} />
      </div>
      <div className="flex pl-[47px]">
        <Group label="Measure" width="w-[64px]" tools={["ruler", "clamp", "weight"]} />
      </div>
      <div className="flex pl-2.5">
        <Group label="View" width="w-[257px]" tools={["plane3", "fit", "pan", "orbit", "zoomIn", "zoomOut", "normal", "views", "iso*", "shade*", "hide", "showSpace"]} />
      </div>
      <div className="flex pl-1">
        <Group label="Analysis" width="w-[86px]" tools={["redplane", "curvature", "section", "material"]} />
      </div>
      <div className="relative ml-auto h-6 w-[38px]">
        <svg viewBox="0 0 38 24" className="h-6 w-[38px]" fill="none" strokeLinecap="round" aria-hidden="true">
          <path d="M8 1.500q5-1.500 7-.5 1 1-3 3.500 4 0 3 2.500-1 1-2 1.500" stroke="#e02838" strokeWidth="1.500" />
          <path d="M6 9.500 3 17q8 0 9-4 0-4-8-4" stroke="#503898" strokeWidth="1.300" />
          <path d="M20 7q-4-1-5 1t2 3 0 5q-2 1-4 0" stroke="#f8a020" strokeWidth="1.800" />
        </svg>
        <span className="absolute bottom-0 left-2 font-['Open_Sans',sans-serif] text-[8px] leading-[7px] font-semibold text-[#403080] italic">CATIA</span>
      </div>
    </div>
  );
}

function StatusBar() {
  return (
    <footer className="flex h-[18px] items-center border-b border-[#8c8c94] bg-[#cfcfe6] pr-0.5 pl-0.5 text-[9px] text-[#222]">
      <label htmlFor="command" className="flex-1 leading-3">Select an object or a command</label>
      <input id="command" className="h-[14px] w-[224px] border border-[#8c8ca0] border-r-[#e8e8f4] border-b-[#e8e8f4] bg-white px-1 outline-none" />
      <button type="button" aria-label="Dialog" className="ml-px flex h-[15px] w-[25px] items-center justify-center border border-[#e8e8f4] border-r-[#88889a] border-b-[#88889a]">
        <svg viewBox="0 0 12 10" className="h-2.5 w-3" fill="none" stroke="#a4a4b4"><path d="M1 1.500h6v5H1zM3 9h8V2" /></svg>
      </button>
      <button type="button" aria-label="Power input" className="flex h-[15px] w-6 items-center justify-center border border-[#e8e8f4] border-r-[#88889a] border-b-[#88889a]">
        <svg viewBox="0 0 12 12" className="h-3 w-3" fill="none"><path d="M1 1h10v9H1z" fill="#dcdce8" stroke="#303850" /><circle cx="6" cy="5.500" r="3" fill="#e8f8ff" stroke="#204880" /><path d="M6 4v3M3 11h8" stroke="#2050c0" strokeWidth="1.300" /></svg>
      </button>
    </footer>
  );
}

export default function App() {
  return (
    <div className="flex h-screen flex-col overflow-hidden font-['Open_Sans',sans-serif]">
      <TitleBar />
      <MenuBar />
      <TopToolbars />
      <Viewport />
      <BottomToolbar />
      <StatusBar />
    </div>
  );
}
